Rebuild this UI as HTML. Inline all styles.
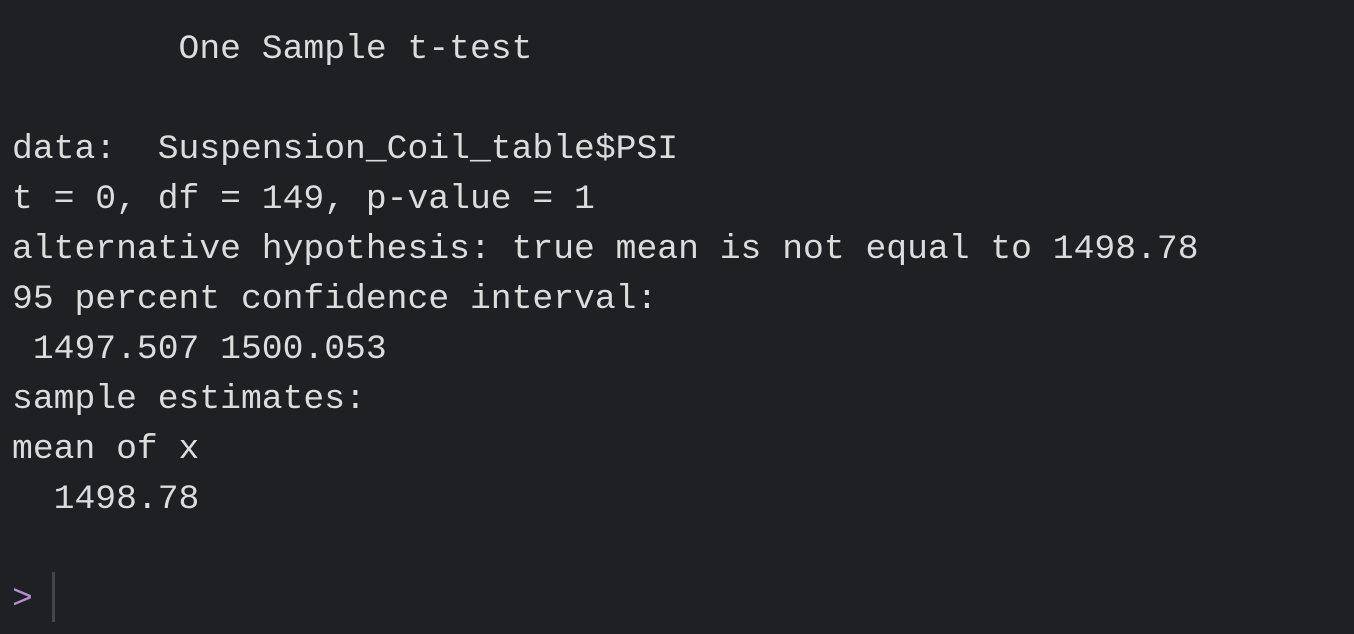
<!DOCTYPE html>
<html><head><meta charset="utf-8"><style>
html,body{margin:0;padding:0;background:#1f2023;width:1354px;height:634px;overflow:hidden}
pre{position:absolute;left:12px;top:25px;margin:0;font-family:"Liberation Mono",monospace;font-size:34.7px;line-height:50px;color:#dcdcdc;white-space:pre}
.p{color:#b48fc9}
.cur{position:absolute;left:52px;top:572px;width:3px;height:50px;background:#444549}
</style></head><body>
<pre>        One Sample t-test

data:  Suspension_Coil_table$PSI
t = 0, df = 149, p-value = 1
alternative hypothesis: true mean is not equal to 1498.78
95 percent confidence interval:
 1497.507 1500.053
sample estimates:
mean of x 
  1498.78 

<span class="p">&gt;</span></pre>
<div class="cur"></div>
</body></html>
